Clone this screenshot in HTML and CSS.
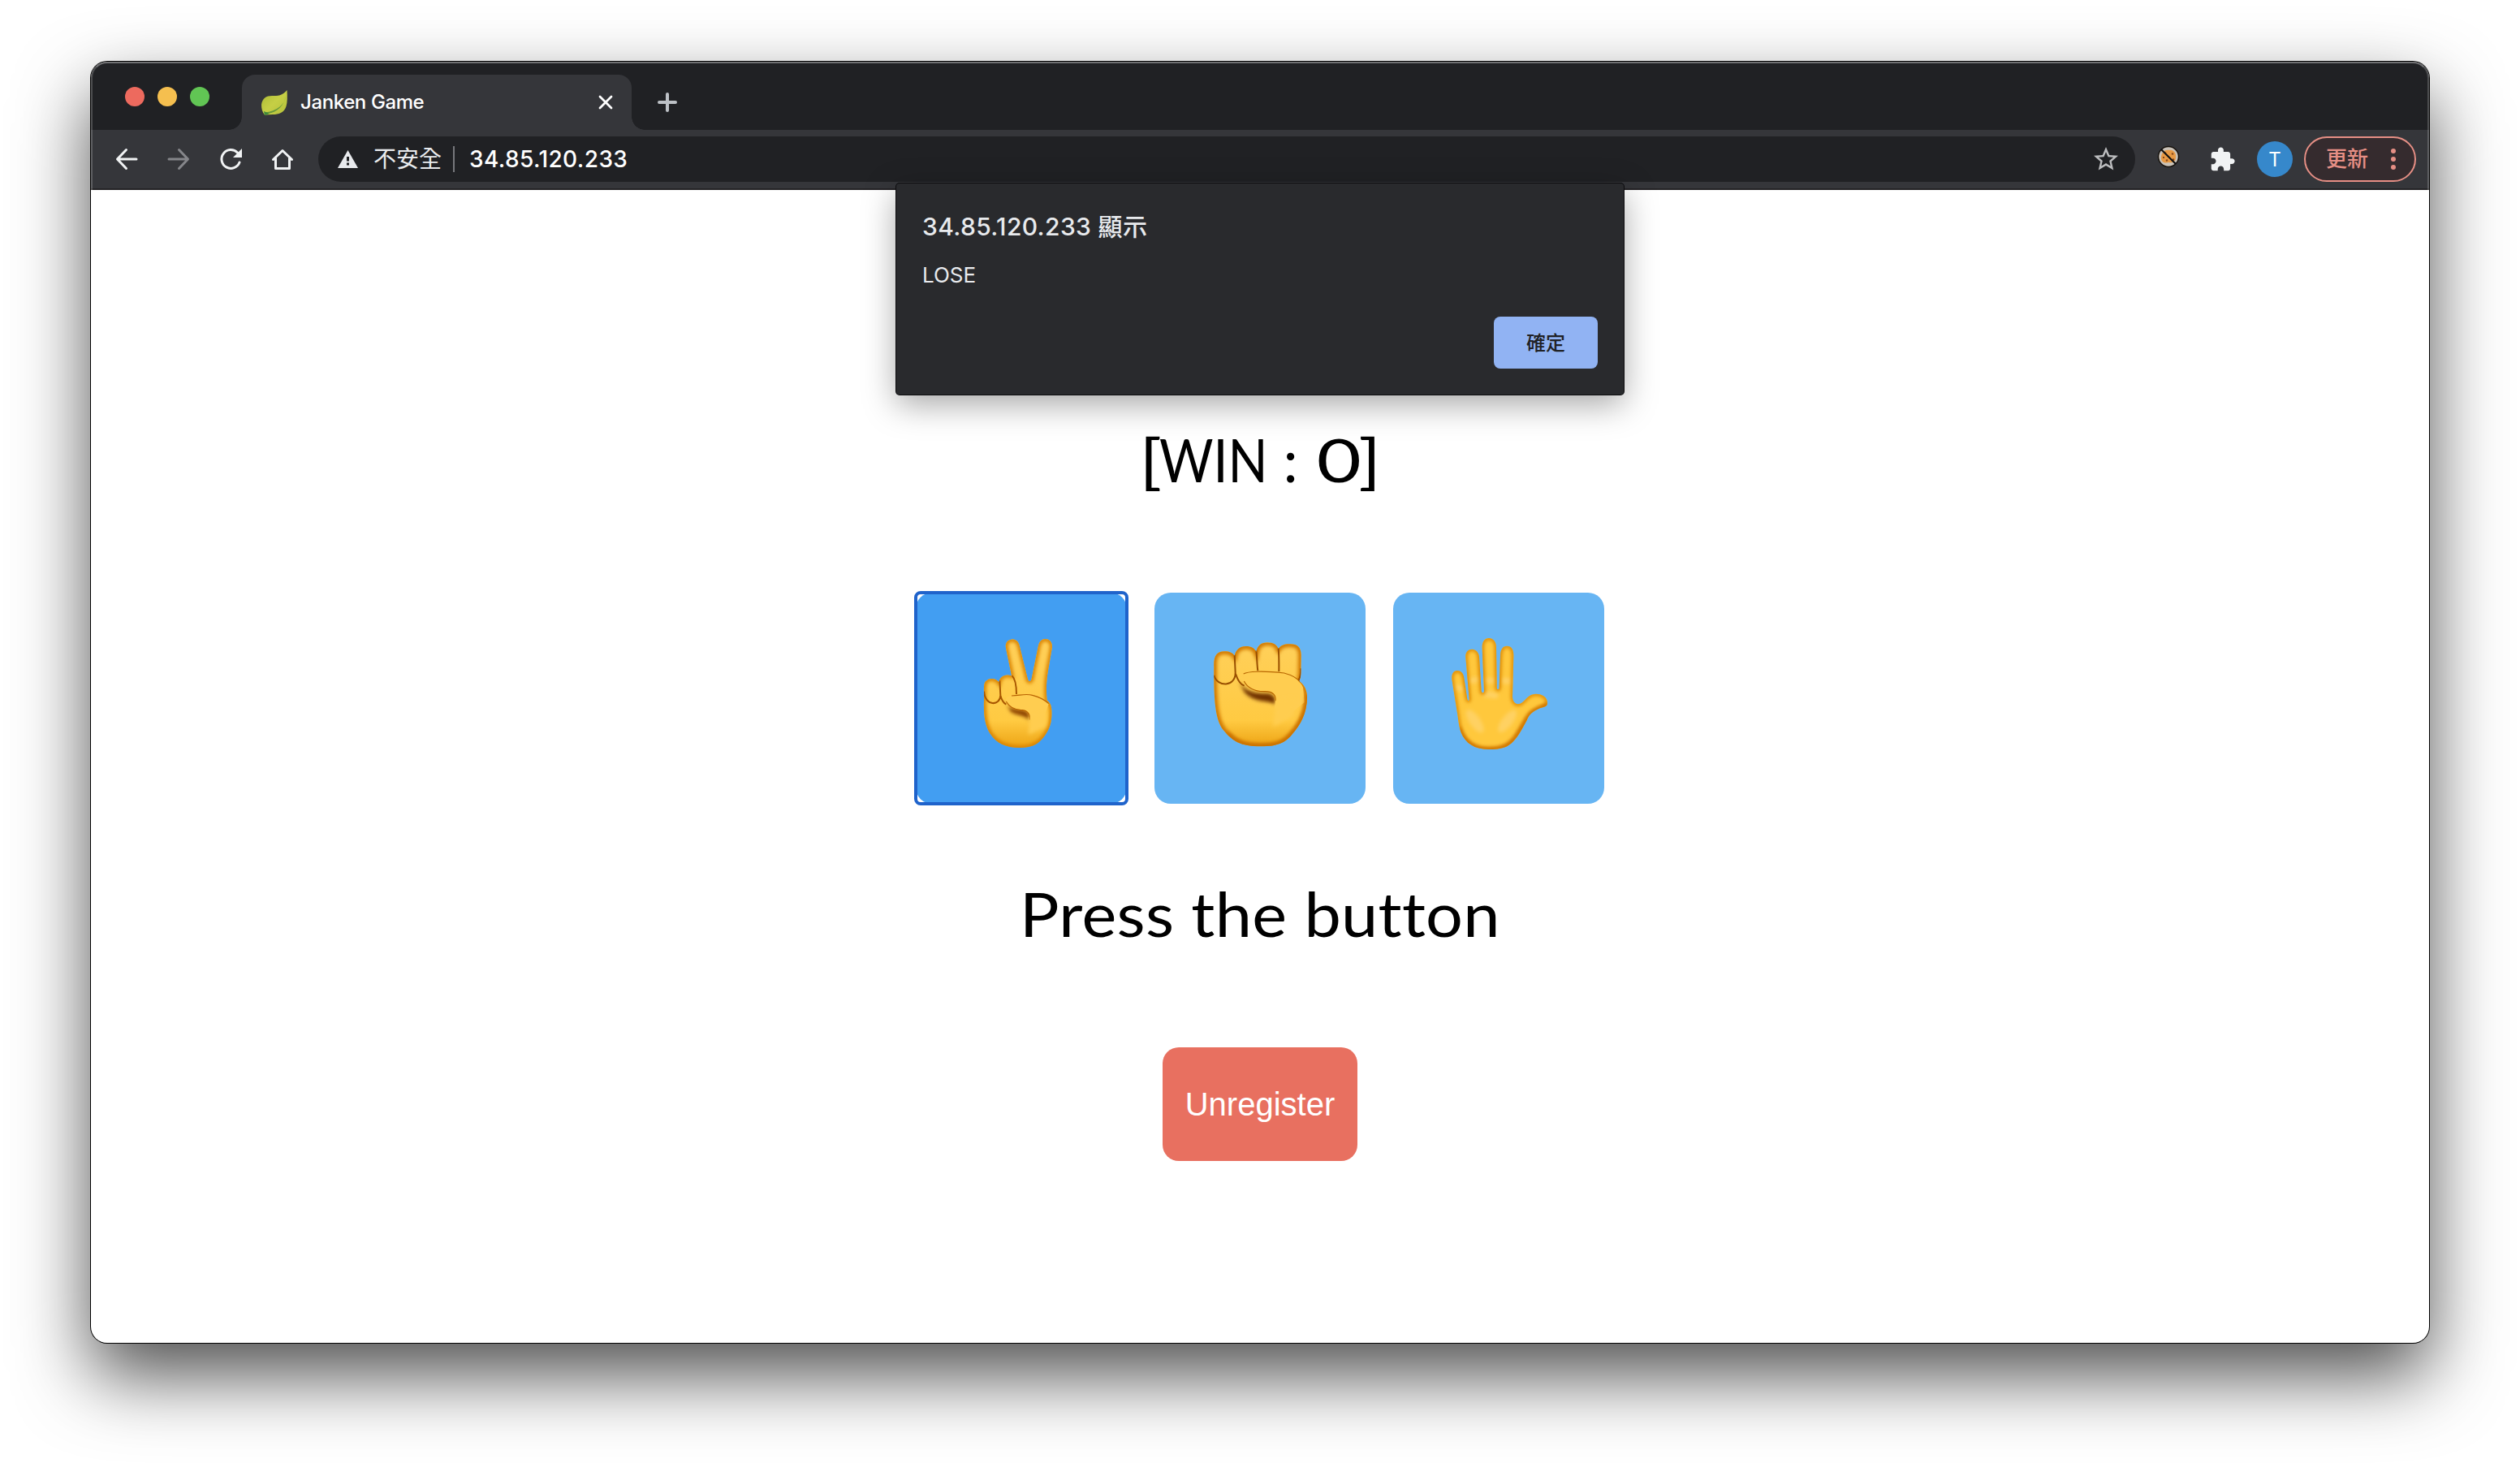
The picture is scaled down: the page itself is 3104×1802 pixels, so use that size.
FILE: index.html
```html
<!DOCTYPE html>
<html lang="zh-Hant">
<head>
<meta charset="utf-8">
<title>Janken Game</title>
<link rel="stylesheet" href="styles.css">
</head>
<body>
<div class="window">
  <header class="chrome">
    <div class="tabstrip">
      <div class="lights"><span class="light red"></span><span class="light yellow"></span><span class="light green"></span></div>
      <div class="tab">
        <svg class="favicon" viewBox="0 0 32 32">
          <defs><linearGradient id="leaf" x1="0" y1="0" x2="1" y2="1"><stop offset="0" stop-color="#a9b833"/><stop offset=".5" stop-color="#c6cf45"/><stop offset="1" stop-color="#b4c03a"/></linearGradient></defs>
          <path d="M31.500 1C32 9 32 16 30.500 21C28 29 21 31 14 31L4 31.500C1 28 0 24 0 19C1 11 6 8 13 8C20 8 26 8 31.500 1Z" fill="url(#leaf)"/>
          <path d="M30 8C29 19 19 27 4 28.500L4 31L8 30C20 28 28 20 30 8Z" fill="#67983a"/>
          <path d="M3 27L10 30L4 32Z" fill="#3f8a3a"/>
        </svg>
        <span class="tab-title">Janken Game</span>
        <svg class="close" viewBox="0 0 16 16"><path d="M1 1L15 15M15 1L1 15"/></svg>
      </div>
      <svg class="plus" viewBox="0 0 24 24"><path d="M12 2V22M2 12H22"/></svg>
    </div>
    <div class="toolbar">
      <svg class="nav" viewBox="0 0 32 32"><path d="M15.500 4.500L4.500 16L15.500 27.500M5 16H28"/></svg>
      <svg class="nav dim" viewBox="0 0 32 32"><path d="M16.500 4.500L27.500 16L16.500 27.500M27 16H4"/></svg>
      <svg class="nav" viewBox="0 0 32 32"><path d="M27 20A11.400 11.400 0 1 1 24.500 8"/><path class="solid" d="M30 3V14H19Z"/></svg>
      <svg class="nav" viewBox="0 0 32 32"><path d="M4.500 16.500L16 5.500L27.500 16.500M7.500 15V27.500H24.500V15"/></svg>
      <div class="omnibox">
        <svg class="warn" viewBox="0 0 25 22"><path d="M12.500 0L25 22H0Z" fill="#e8eaed"/><path d="M11 8H14V13.500H11ZM11 15.500H14V18.500H11Z" fill="#202124"/></svg>
        <span class="insecure">不安全</span>
        <span class="divider"></span>
        <span class="url">34.85.120.233</span>
        <svg class="star" viewBox="0 0 24 24"><path d="M22 9.240l-7.190-.620L12 2 9.190 8.630 2 9.240l5.460 4.730L5.820 21 12 17.270 18.180 21l-1.630-7.030L22 9.240zM12 15.400l-3.760 2.270 1-4.280-3.320-2.880 4.380-.380L12 6.100l1.710 4.040 4.380.380-3.320 2.880 1 4.280L12 15.400z"/></svg>
      </div>
      <svg class="cookie" viewBox="0 0 28 28">
        <circle cx="14" cy="14" r="12.500" fill="#c9c2b8" stroke="#17120d" stroke-width="1.500"/>
        <path d="M5 14C6 8 10 5 15 6C20 5 24 10 23 15C23 20 19 22 14 21C9 23 4 20 5 14Z" fill="#e79a45"/>
        <path d="M9 9l2 1M18 10l2 1M7 15h2M11 19l2-1M19 17l2 1" stroke="#884a1c" stroke-width="2"/>
        <path d="M5 5L23 23" stroke="#101010" stroke-width="2.200"/>
      </svg>
      <svg class="puzzle" viewBox="0 0 24 24"><path d="M20.500 11H19V7c0-1.100-.900-2-2-2h-4V3.500C13 2.120 11.880 1 10.500 1S8 2.120 8 3.500V5H4c-1.100 0-1.990.900-1.990 2v3.800H3.500c1.490 0 2.700 1.210 2.700 2.700s-1.210 2.700-2.700 2.700H2V20c0 1.100.900 2 2 2h3.800v-1.500c0-1.490 1.210-2.700 2.700-2.700 1.490 0 2.700 1.210 2.700 2.700V22H17c1.100 0 2-.900 2-2v-4h1.500c1.380 0 2.500-1.120 2.500-2.500S21.880 11 20.500 11z"/></svg>
      <span class="avatar">T</span>
      <span class="update">更新<svg class="dots" viewBox="0 0 6 26"><circle cx="3" cy="3" r="3"/><circle cx="3" cy="13" r="3"/><circle cx="3" cy="23" r="3"/></svg></span>
    </div>
  </header>

  <main class="page">
    <h1 class="score"><span class="bracket">[</span><span class="word">WIN</span> : <span class="zero">0</span><span class="bracket">]</span></h1>
    <div class="hands">
      <button class="hand focused" aria-label="Scissors">
        <svg viewBox="54 45 780 780">
          <defs>
            <linearGradient id="skin" x1="0" y1="0" x2="0" y2="1"><stop offset="0" stop-color="#ffd05a"/><stop offset=".75" stop-color="#ffca42"/><stop offset="1" stop-color="#eda414"/></linearGradient>
            <filter id="soft" x="-30%" y="-30%" width="160%" height="160%"><feGaussianBlur stdDeviation="7"/></filter>
            <filter id="fine" x="-30%" y="-30%" width="160%" height="160%"><feGaussianBlur stdDeviation="2"/></filter>
            <path id="peace" d="M306 440C304 500 310 535 328 565C352 602 385 618 440 618C490 618 512 600 533 570C552 542 557 520 556 482C556 462 550 450 539 444C535 410 537 370 541 345L557 252C561 228 548 216 532 216C516 217 509 229 506 245L482 362C480 374 471 375 468 365L437 240C432 222 421 216 406 218C390 221 384 234 387 250L408 352C382 344 364 356 361 376C350 360 325 358 312 373C304 382 306 400 306 440Z"/>
            <clipPath id="peaceClip"><use href="#peace"/></clipPath>
          </defs>
          <use href="#peace" fill="url(#skin)"/>
          <g clip-path="url(#peaceClip)">
            <use href="#peace" fill="none" stroke="#d98200" stroke-width="17" filter="url(#soft)"/>
            <path d="M380 440C390 472 420 475 448 478C470 483 477 495 473 516C455 495 425 500 405 485Z" fill="#8c4300" filter="url(#soft)"/>
            <path d="M306 410C310 465 365 465 367 425L364 370M367 425C372 444 381 454 388 458M410 352C423 365 426 390 426 420" fill="none" stroke="#a85600" stroke-width="6" filter="url(#fine)"/>
            <path d="M408 426C440 425 460 417 485 424C510 430 530 441 545 455L530 500L475 515C478 490 463 478 440 478C415 476 397 463 388 447C384 434 392 426 408 426Z" fill="#ffcd50"/>
            <path d="M408 426C440 425 460 417 485 424C510 430 530 441 545 455M388 447C397 463 415 476 440 478C463 478 478 490 475 515" fill="none" stroke="#b86200" stroke-width="3.500" filter="url(#fine)"/>
            <path d="M475 505L535 485L535 540L470 570Z" fill="#ffcd50" filter="url(#soft)"/>
          </g>
        </svg>
      </button>
      <button class="hand" aria-label="Rock">
        <svg viewBox="36 45 780 780">
          <defs>
            <path id="fist" d="M256 320C254 280 265 262 294 262C315 262 325 268 332 278C337 254 352 243 374 243C395 243 406 250 412 264C416 240 432 229 453 229C476 229 488 238 494 252C502 240 517 234 538 235C565 236 577 246 578 275L577 340C577 355 575 364 571 372C590 386 600 405 600 432C600 490 575 535 545 568C520 600 490 613 430 613C360 613 330 600 290 552C262 515 255 450 256 320Z"/>
            <clipPath id="fistClip"><use href="#fist"/></clipPath>
          </defs>
          <use href="#fist" fill="url(#skin)"/>
          <g clip-path="url(#fistClip)">
            <use href="#fist" fill="none" stroke="#d07800" stroke-width="22" filter="url(#soft)"/>
            <path d="M345 370C380 425 430 415 460 418C480 425 488 440 484 458C450 440 410 455 370 415Z" fill="#703300" filter="url(#soft)"/>
            <path d="M256 350C268 395 336 395 335 340L332 275M336 345C344 370 355 385 368 389M412 258C415 285 415 315 418 334M494 250C497 285 496 315 496 336M577 325C577 350 572 364 568 370" fill="none" stroke="#995000" stroke-width="6" filter="url(#fine)"/>
            <path d="M385 338C435 333 480 332 515 342C545 350 575 370 585 395L590 450L530 500L480 470C490 430 475 408 440 410C405 410 378 395 367 372C362 351 365 339 385 338Z" fill="#ffcd50"/>
            <path d="M365 345C380 336 435 333 515 342C545 350 565 362 575 376M367 372C378 395 405 410 440 410C475 408 485 425 484 445" fill="none" stroke="#b86600" stroke-width="3.500" filter="url(#fine)"/>
            <path d="M485 440L560 430L550 500L475 540Z" fill="#ffcd50" filter="url(#soft)"/>
            <path d="M602 420C600 490 575 535 545 568C520 600 490 613 430 613C380 613 340 605 305 565" fill="none" stroke="#ca7100" stroke-width="15" filter="url(#soft)"/>
          </g>
        </svg>
      </button>
      <button class="hand" aria-label="Paper">
        <svg viewBox="48 45 780 780">
          <defs>
            <path id="palm" d="M265 365C263 342 273 333 286 333C301 334 308 345 310 360L322 438C324 446 330 445 329 437L316 285C314 265 325 254 339 254C354 254 364 265 366 282L374 408C375 418 384 418 384 408L377 250C376 226 386 213 402 213C419 214 429 227 429 247L431 396C432 405 439 405 440 396L444 278C445 253 454 242 468 242C486 242 493 255 493 278L489 430C490 455 508 464 526 450C540 438 548 421 575 419C600 419 618 432 618 452C618 468 605 465 590 472C565 484 553 490 541 518C523 552 510 575 493 593C472 616 450 624 400 624C350 624 315 602 299 562C290 535 289 515 285 490Z"/>
            <clipPath id="palmClip"><use href="#palm"/></clipPath>
          </defs>
          <use href="#palm" fill="#ffc83c"/>
          <g clip-path="url(#palmClip)">
            <ellipse cx="350" cy="520" rx="20" ry="50" transform="rotate(-35 350 520)" fill="#ffd162" filter="url(#soft)"/>
            <ellipse cx="470" cy="520" rx="20" ry="50" transform="rotate(38 470 520)" fill="#ffd162" filter="url(#soft)"/>
            <path d="M285 395L300 400M335 370L358 366M390 370L420 370M454 370L480 372M390 420L425 425" stroke="#ffd162" stroke-width="22" stroke-linecap="round" filter="url(#soft)"/>
            <use href="#palm" fill="none" stroke="#dc8700" stroke-width="13" filter="url(#soft)"/>
            <path d="M290 545C310 605 350 626 400 626C450 626 480 612 505 575C525 545 540 510 560 492C580 475 610 470 620 455" fill="none" stroke="#cf7400" stroke-width="18" filter="url(#soft)"/>
          </g>
        </svg>
      </button>
    </div>
    <h2 class="prompt">Press the button</h2>
    <button class="unregister">Unregister</button>
  </main>

  <section class="dialog" role="alertdialog">
    <h3 class="dialog-title">34.85.120.233 顯示</h3>
    <p class="dialog-text">LOSE</p>
    <button class="ok">確定</button>
  </section>
</div>
</body>
</html>
```
FILE: styles.css
```css
* { box-sizing: border-box; margin: 0; padding: 0; }
body { height: 1802px; padding: 76px 112px; background: #fff; overflow: hidden; font-family: Inter, "Noto Sans CJK TC", sans-serif; }
svg { display: block; flex: none; }
button { border: 0; font: inherit; }
.window { position: relative; width: 2880px; height: 1578px; border-radius: 20px; background: #fff; display: flex; flex-direction: column; box-shadow: 0 0 0 1px #000, 0 40px 90px rgba(0, 0, 0, .69); }

.chrome { height: 158px; border-radius: 20px 20px 0 0; overflow: hidden; background: #202124; position: relative; }
.chrome::after { content: ""; position: absolute; inset: 0 0 -40px; border: 2px solid rgba(255, 255, 255, .2); border-top-color: rgba(255, 255, 255, .36); border-radius: 20px; pointer-events: none; }
.tabstrip { height: 84px; padding: 16px 0 0 42px; display: flex; align-items: flex-start; }
.lights { display: flex; gap: 16px; padding-top: 15px; width: 144px; }
.light { width: 24px; height: 24px; border-radius: 50%; }
.red { background: #ed6a5e; }
.yellow { background: #f5bf4f; }
.green { background: #61c554; }
.tab { position: relative; width: 480px; height: 68px; padding: 0 24px; display: flex; align-items: center; background: #35363a; border-radius: 16px 16px 0 0; }
.tab::before, .tab::after { content: ""; position: absolute; bottom: 0; width: 16px; height: 16px; }
.tab::before { left: -16px; background: radial-gradient(circle at 0 0, transparent 15.500px, #35363a 16px); }
.tab::after { right: -16px; background: radial-gradient(circle at 100% 0, transparent 15.500px, #35363a 16px); }
.favicon { width: 32px; height: 32px; }
.tab-title { flex: 1; margin: -2px 0 0 16px; color: #fff; font-size: 24px; font-weight: 450; letter-spacing: -.4px; }
.close { width: 16px; height: 16px; fill: none; stroke: #fff; stroke-width: 2.800; stroke-linecap: round; overflow: visible; }
.plus { width: 24px; height: 24px; margin: 22px 0 0 32px; fill: none; stroke: #bdc1c6; stroke-width: 4; stroke-linecap: round; }

.toolbar { height: 74px; padding: 8px 16px 10px 28px; display: flex; align-items: center; background: #35363a; box-shadow: inset 0 -2px #242225; }
.nav { width: 32px; height: 32px; margin-right: 32px; fill: none; stroke: #f1f3f4; stroke-width: 3; stroke-linecap: round; stroke-linejoin: round; }
.nav .solid { fill: #f1f3f4; stroke: none; }
.dim { stroke: #85868a; }
.omnibox { flex: none; width: 2238px; height: 56px; margin-left: -4px; padding: 0 18px 0 24px; display: flex; align-items: center; border-radius: 28px; background: #202124; white-space: nowrap; }
.warn { width: 25px; height: 22px; }
.insecure { margin-left: 19px; width: 98px; color: #e8eaed; font-size: 28px; line-height: 56px; }
.divider { width: 2px; height: 32px; background: #76777b; }
.url { flex: 1; margin-left: 18px; color: #fff; font-size: 28px; font-weight: 450; letter-spacing: .4px; }
.star { width: 36px; height: 36px; fill: #bcbdbf; }
.cookie { width: 28px; height: 28px; margin: -6px 0 0 27px; }
.puzzle { width: 33px; height: 33px; margin-left: 36px; fill: #f1f3f4; }
.avatar { flex: none; width: 44px; height: 44px; margin-left: 26px; border-radius: 50%; background: #3688cb; color: #fff; font-size: 24px; line-height: 45px; text-align: center; }
.update { flex: none; width: 138px; height: 56px; margin-left: 14px; padding: 0 23px 0 25px; display: flex; align-items: center; justify-content: space-between; border: 2px solid #e68f85; border-radius: 28px; background: #352b2e; color: #e68f85; font-size: 26px; font-weight: 500; line-height: 50px; }
.dots { width: 6px; height: 26px; fill: #e68f85; }

.page { flex: 1; display: flex; flex-direction: column; align-items: center; }
.score { margin-top: 282px; height: 100px; font: 400 73px/100px Lato, sans-serif; white-space: nowrap; }
.word { display: inline-block; transform: scaleX(.88); transform-origin: left; margin-right: -18px; }
.zero { display: inline-block; transform: scaleX(1.3); margin: 0 6px 0 10px; }
.bracket { display: inline-block; transform: scaleX(1.25); }
.hands { margin-top: 114px; display: flex; gap: 34px; }
.hand { position: relative; width: 260px; height: 260px; border-radius: 20px; background: #67b5f3; }
.hand svg { width: 260px; height: 260px; }
.focused { background: #429ef2; }
.focused::after { content: ""; position: absolute; inset: -2px; border: 4px solid #1f63cb; border-radius: 8px; }
.prompt { margin-top: 80px; height: 110px; font: 400 75px/110px Lato, sans-serif; white-space: nowrap; transform: scaleX(1.08); letter-spacing: .3px; }
.unregister { margin-top: 110px; width: 240px; height: 140px; border-radius: 20px; background: #e87060; color: #fff; font: 40px "Liberation Sans", Arial, sans-serif; }

.dialog { position: absolute; left: 992px; top: 150px; width: 896px; height: 260px; padding: 32px; border-radius: 4px; background: #292a2d; color: #e8eaed; display: flex; flex-direction: column; align-items: flex-start; box-shadow: 0 0 0 1px #0c0c0e, 0 12px 40px rgba(0, 0, 0, .35); white-space: nowrap; }
.dialog-title { height: 42px; font-size: 30px; font-weight: 450; line-height: 42px; letter-spacing: .35px; }
.dialog-text { margin-top: 22px; font-size: 26px; line-height: 34px; }
.ok { margin: auto 0 0; padding-bottom: 4px; align-self: flex-end; width: 128px; height: 64px; border-radius: 8px; background: #91b3f3; color: #202124; font-size: 24px; font-weight: 500; }
```
